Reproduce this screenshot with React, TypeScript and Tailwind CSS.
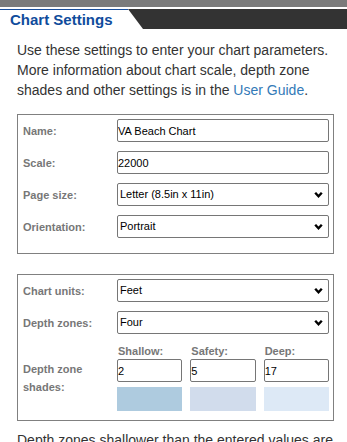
import React from "react";

const label = "w-[94px] shrink-0 text-[11px] font-bold leading-[18px] text-[#777]";
const field =
  "block h-[23px] w-full rounded-[2px] border border-[#767676] bg-white text-[11px] leading-[21px] text-black outline-none";

function TextField({ value }: { value: string }) {
  return <input className={`${field} px-0`} defaultValue={value} readOnly />;
}

function SelectField({ value }: { value: string }) {
  return (
    <div className="relative w-full">
      <select className={`${field} appearance-none pl-[2px]`} defaultValue={value}>
        <option>{value}</option>
      </select>
      {/* chevron */}
      <svg
        className="pointer-events-none absolute right-[6px] top-1/2 -translate-y-1/2"
        width="9"
        height="7"
        viewBox="0 0 9 7"
      >
        <polyline points="1.2,1.3 4.5,4.8 7.8,1.3" fill="none" stroke="#000" strokeWidth="2.4" />
      </svg>
    </div>
  );
}

function Row({ name, children }: { name: string; children: React.ReactNode }) {
  return (
    <div className="flex h-[23px] items-center">
      <span className={label}>{name}</span>
      <div className="flex-1">{children}</div>
    </div>
  );
}

export default function App() {
  const shades = [
    { name: "Shallow:", value: "2", color: "bg-[#aecbdf]" },
    { name: "Safety:", value: "5", color: "bg-[#d1dcec]" },
    { name: "Deep:", value: "17", color: "bg-[#dde9f6]" },
  ];

  return (
    <div className="h-[442px] w-[347px] overflow-hidden bg-white font-['Liberation_Sans',Arial,sans-serif] text-[#333]">
      {/* header tab */}
      <div className="h-[7px] bg-[#7b7b7b]" />
      <div className="h-[2px] bg-white" />
      <div className="flex h-[20px]">
        <div className="w-[128px] border-t border-[#1a4f9b] pl-[10px] text-[15px] font-bold leading-[20px] text-[#0f4c9c]">
          Chart Settings
        </div>
        <div className="flex-1 bg-[#333] [clip-path:polygon(0_0,100%_0,100%_100%,15px_100%)]" />
      </div>

      <p className="mt-[11px] pl-[17px] pr-[13px] text-[14px] leading-[20px]">
        Use these settings to enter your chart parameters. More information about chart scale, depth
        zone shades and other settings is in the <a className="text-[#337ab7]">User Guide</a>.
      </p>

      {/* chart box */}
      <div className="ml-[17px] mt-[14px] flex w-[317px] flex-col gap-[9px] border border-[#808080] pb-[15px] pl-[5px] pr-[4px] pt-[4px]">
        <Row name="Name:">
          <TextField value="VA Beach Chart" />
        </Row>
        <Row name="Scale:">
          <TextField value="22000" />
        </Row>
        <Row name="Page size:">
          <SelectField value="Letter (8.5in x 11in)" />
        </Row>
        <Row name="Orientation:">
          <SelectField value="Portrait" />
        </Row>
      </div>

      {/* depth box */}
      <div className="ml-[17px] mt-[20px] flex w-[317px] flex-col gap-[9px] border border-[#808080] pb-[9px] pl-[5px] pr-[4px] pt-[4px]">
        <Row name="Chart units:">
          <SelectField value="Feet" />
        </Row>
        <Row name="Depth zones:">
          <SelectField value="Four" />
        </Row>
        <div className="mt-[1px] flex items-center">
          <span className={label}>
            Depth zone
            <br />
            shades:
          </span>
          <div className="grid flex-1 grid-cols-3 gap-x-[8px]">
            {shades.map((s) => (
              <div key={s.name} className="flex flex-col">
                <span className="pl-[1px] text-[11px] font-bold leading-[14px] text-[#777]">{s.name}</span>
                <div className="mt-[1px]">
                  <TextField value={s.value} />
                </div>
                <div className={`mt-[5px] h-[24px] ${s.color}`} />
              </div>
            ))}
          </div>
        </div>
      </div>

      <p className="mt-[9px] pl-[17px] pr-[13px] text-[14px] leading-[20px]">
        Depth zones shallower than the entered values are shaded with the colors shown.
      </p>
    </div>
  );
}
